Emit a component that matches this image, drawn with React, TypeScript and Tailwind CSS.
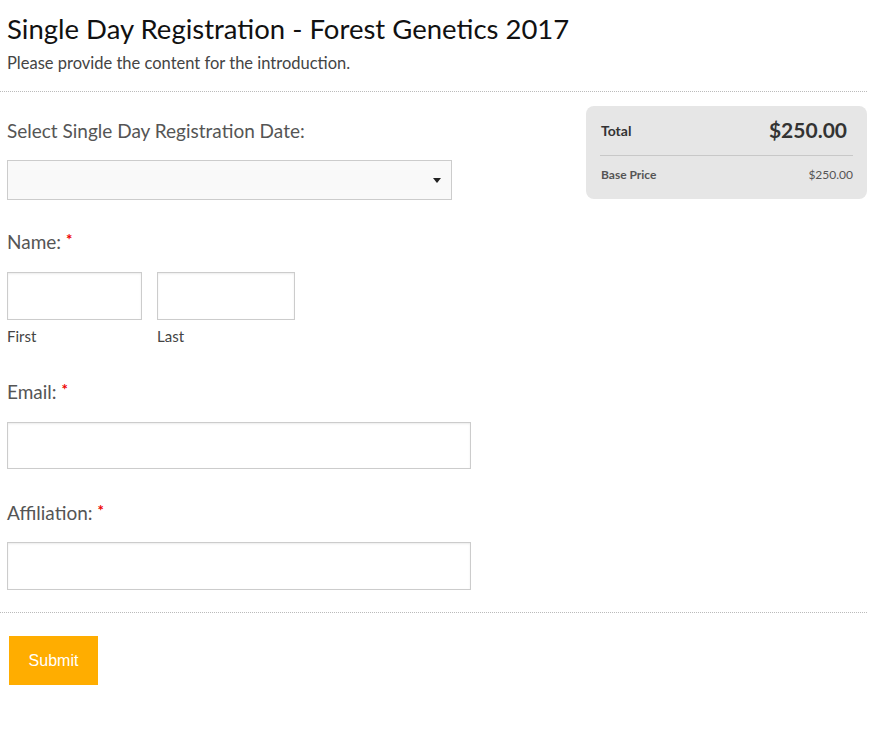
function Label({ text, required }: { text: string; required?: boolean }) {
  return (
    <div className="text-[19px] leading-[24px] text-[#555]">
      {text}
      {required && (
        <span className="relative -top-[4px] ml-[5px] text-[15px] font-bold text-[#e00]">*</span>
      )}
    </div>
  );
}

function Field({ className = '' }: { className?: string }) {
  return (
    <input
      className={`block border border-[#ccc] bg-white shadow-[inset_0_1px_2px_rgba(0,0,0,0.08)] outline-none ${className}`}
    />
  );
}

export default function App() {
  return (
    <div className="min-h-screen bg-white" style={{ fontFamily: 'Lato, "Noto Sans", sans-serif' }}>
      <div className="w-[867px] pt-[12px]">
        <div className="px-[7px]">
          <h1 className="text-[27.5px] leading-[33px] text-[#111]">Single Day Registration - Forest Genetics 2017</h1>
          <p className="mt-[8px] text-[16.5px] leading-[20px] text-[#444]">Please provide the content for the introduction.</p>
        </div>
        <div className="mt-[18px] border-t border-dotted border-[#bbb]" />

        <div className="flex justify-between pl-[7px] pt-[14px]">
          <div className="w-[464px]">
            <div className="pt-[13px]">
              <Label text="Select Single Day Registration Date:" />
            </div>
            <div className="mt-[17px] flex h-[40px] w-[445px] items-center justify-end border border-[#ccc] bg-[#f9f9f9] pr-[10px]">
              <svg width="8" height="5" viewBox="0 0 8 5"><path d="M0 0h8L4 5z" fill="#222" /></svg>
            </div>

            <div className="mt-[30px]">
              <Label text="Name:" required />
            </div>
            <div className="mt-[17px] flex gap-[15px]">
              <div>
                <Field className="h-[48px] w-[135px]" />
                <div className="mt-[7px] text-[15px] leading-[18px] text-[#444]">First</div>
              </div>
              <div>
                <Field className="h-[48px] w-[138px]" />
                <div className="mt-[7px] text-[15px] leading-[18px] text-[#444]">Last</div>
              </div>
            </div>

            <div className="mt-[35px]">
              <Label text="Email:" required />
            </div>
            <Field className="mt-[17px] h-[47px] w-[464px]" />

            <div className="mt-[32px]">
              <Label text="Affiliation:" required />
            </div>
            <Field className="mt-[16px] h-[48px] w-[464px]" />
          </div>

          <div className="h-[93px] w-[281px] rounded-[8px] bg-[#e6e6e6] px-[14px] pt-[13px]">
            <div className="flex h-[22px] items-center justify-between">
              <span className="pl-[1px] text-[14px] font-bold text-[#333]">Total</span>
              <span className="pr-[6px] text-[21px] font-bold text-[#333]">$250.00</span>
            </div>
            <div className="mt-[14px] border-t border-[#c8c8c8]" />
            <div className="mt-[11px] flex h-[16px] items-center justify-between">
              <span className="pl-[1px] text-[12px] font-bold text-[#555]">Base Price</span>
              <span className="text-[12px] text-[#555]">$250.00</span>
            </div>
          </div>
        </div>

        <div className="mt-[22px] border-t border-dotted border-[#bbb]" />
        <div className="px-[9px] pt-[23px]">
          <button
            className="h-[49px] w-[89px] bg-[#ffad00] text-[16px] text-white"
            style={{ fontFamily: '"Liberation Sans", Arial, sans-serif' }}
          >
            Submit
          </button>
        </div>
      </div>
    </div>
  );
}
